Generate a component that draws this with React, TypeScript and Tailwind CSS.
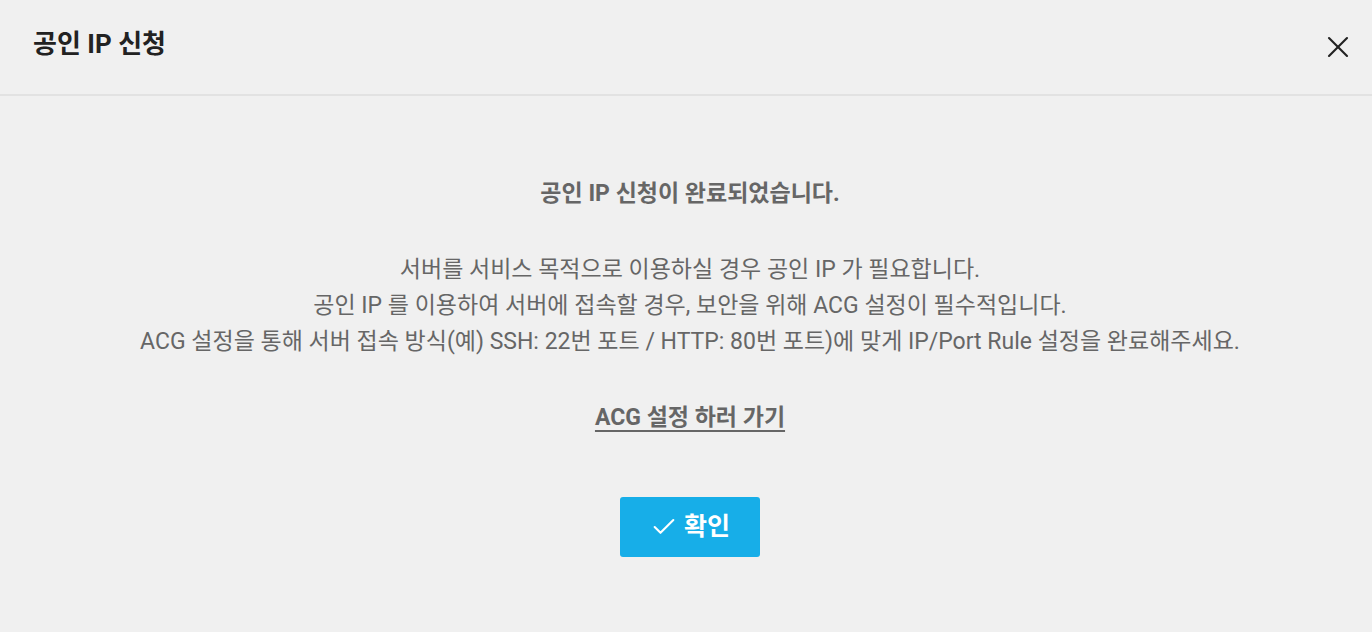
import { X, Check } from "lucide-react";

export default function App() {
  return (
    <div
      className="min-h-screen w-full bg-[#f0f0f0] text-[#666]"
      style={{ fontFamily: "Roboto, 'Noto Sans CJK KR', sans-serif" }}
    >
      <div className="h-[96px] flex items-center justify-between pl-[33px] pr-[16px] border-b-2 border-[#e2e2e2]">
        <h1 className="text-[26px] font-bold text-[#222] pb-[6px]">공인 IP 신청</h1>
        <button className="text-[#222]">
          <X size={36} strokeWidth={1.4} />
        </button>
      </div>
      <div className="flex flex-col items-center text-center pt-[80px] pl-[8px]">
        <p className="text-[23px] font-bold leading-[36px]">공인 IP 신청이 완료되었습니다.</p>
        <div className="mt-[40px] text-[23px] leading-[36px]">
          <p>서버를 서비스 목적으로 이용하실 경우 공인 IP 가 필요합니다.</p>
          <p>공인 IP 를 이용하여 서버에 접속할 경우, 보안을 위해 ACG 설정이 필수적입니다.</p>
          <p>ACG 설정을 통해 서버 접속 방식(예) SSH: 22번 포트 / HTTP: 80번 포트)에 맞게 IP/Port Rule 설정을 완료해주세요.</p>
        </div>
        <a href="#" className="mt-[40px] text-[23px] font-bold leading-[36px] underline underline-offset-[5px]">
          ACG 설정 하러 가기
        </a>
        <button className="mt-[61px] w-[140px] h-[60px] rounded-[3px] bg-[#17aee8] text-white text-[25px] font-bold flex items-center justify-center gap-[6px]">
          <Check size={28} strokeWidth={1.8} />
          확인
        </button>
      </div>
    </div>
  );
}
